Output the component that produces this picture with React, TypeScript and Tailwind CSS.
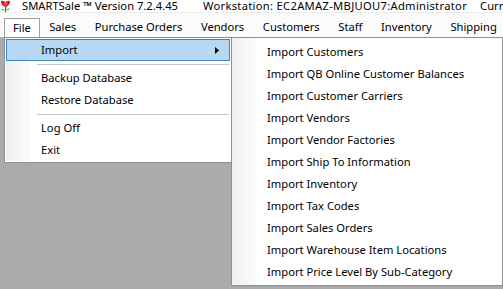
import React from 'react';

const menuBar = ['Sales', 'Purchase Orders', 'Vendors', 'Customers', 'Staff', 'Inventory', 'Shipping'];

const importItems = [
  'Import Customers',
  'Import QB Online Customer Balances',
  'Import Customer Carriers',
  'Import Vendors',
  'Import Vendor Factories',
  'Import Ship To Information',
  'Import Inventory',
  'Import Tax Codes',
  'Import Sales Orders',
  'Import Warehouse Item Locations',
  'Import Price Level By Sub-Category',
];

const Logo = () => (
  <svg width="11" height="12" viewBox="0 0 11 12" className="shrink-0">
    <path d="M1 1 Q3 0 5.5 2 Q8 0 10 1 Q10.5 5 5.5 7 Q0.5 5 1 1 Z" fill="#d01a2a" />
    <path d="M3 2.5 Q5.5 1.5 8 2.5 Q7.5 5 5.5 5.5 Q3.5 5 3 2.5 Z" fill="#e8475a" />
    <rect x="5" y="7" width="1.3" height="5" fill="#2e7d32" />
    <path d="M6.3 9.5 L9.5 8 L8.5 10.5 Z" fill="#4caf50" />
    <path d="M5 10 L1.5 8.5 L2.5 11 Z" fill="#4caf50" />
  </svg>
);

const Separator = () => (
  <div className="h-[6px] flex items-center pl-[31px] pr-[1px]">
    <div className="h-px w-full bg-[#c8c8c8]" />
  </div>
);

const FileItem = ({ label, active }: { label: string; active?: boolean }) => (
  <div
    className={
      'relative h-[22px] flex items-center pl-[34px] ' +
      (active ? 'bg-[#b7d8f3] border border-[#3a86c8]' : 'border border-transparent')
    }
  >
    <span>{label}</span>
    {active && (
      <svg className="absolute right-[10px] top-[7px]" width="4" height="7" viewBox="0 0 4 7">
        <path d="M0 0 L4 3.5 L0 7 Z" fill="#000" />
      </svg>
    )}
  </div>
);

export default function App() {
  return (
    <div
      className="relative w-[503px] h-[289px] overflow-hidden bg-[#ababab] text-[11.2px] text-black"
      style={{ fontFamily: '"Noto Sans", "Open Sans", sans-serif' }}
    >
      {/* window title */}
      <div className="h-[12px] bg-white flex items-start whitespace-nowrap leading-[11px]">
        <Logo />
        <span className="ml-[11px]">SMARTSale ™ Version 7.2.4.45</span>
        <span className="ml-[25px] tracking-[0.3px]">Workstation: EC2AMAZ-MBJUOU7:Administrator</span>
        <span className="ml-[13px]">Current</span>
      </div>

      {/* menu strip */}
      <div className="h-[25px] bg-[#fbfbfb] border-t border-[#ececec] flex items-end whitespace-nowrap">
        <div className="ml-[4px] h-[19px] border border-b-0 border-[#a0a0a0] bg-white px-[8px] flex items-center">
          File
        </div>
        {menuBar.map(m => (
          <div key={m} className="h-[19px] px-[9.3px] flex items-center">
            {m}
          </div>
        ))}
      </div>

      {/* File dropdown */}
      <div className="absolute left-[4px] top-[37px] w-[228px] h-[126px] bg-white border border-[#8f8f8f] py-[1px] px-[1px] whitespace-nowrap">
        <div className="absolute left-[1px] top-[1px] bottom-[1px] w-[24px] bg-gradient-to-r from-[#f0f0f0] to-[#fbfbfb]" />
        <div className="relative">
          <FileItem label="Import" active />
          <Separator />
          <FileItem label="Backup Database" />
          <FileItem label="Restore Database" />
          <Separator />
          <FileItem label="Log Off" />
          <FileItem label="Exit" />
        </div>
      </div>

      {/* Import submenu */}
      <div className="absolute left-[231px] top-[37px] w-[272px] h-[249px] bg-white border border-[#8f8f8f] pt-[3px] whitespace-nowrap">
        <div className="absolute left-0 top-0 bottom-0 w-[24px] bg-gradient-to-r from-[#f0f0f0] to-[#fbfbfb]" />
        <div className="relative">
          {importItems.map(i => (
            <div key={i} className="h-[22px] flex items-center pl-[35px]">
              {i}
            </div>
          ))}
        </div>
      </div>
    </div>
  );
}
